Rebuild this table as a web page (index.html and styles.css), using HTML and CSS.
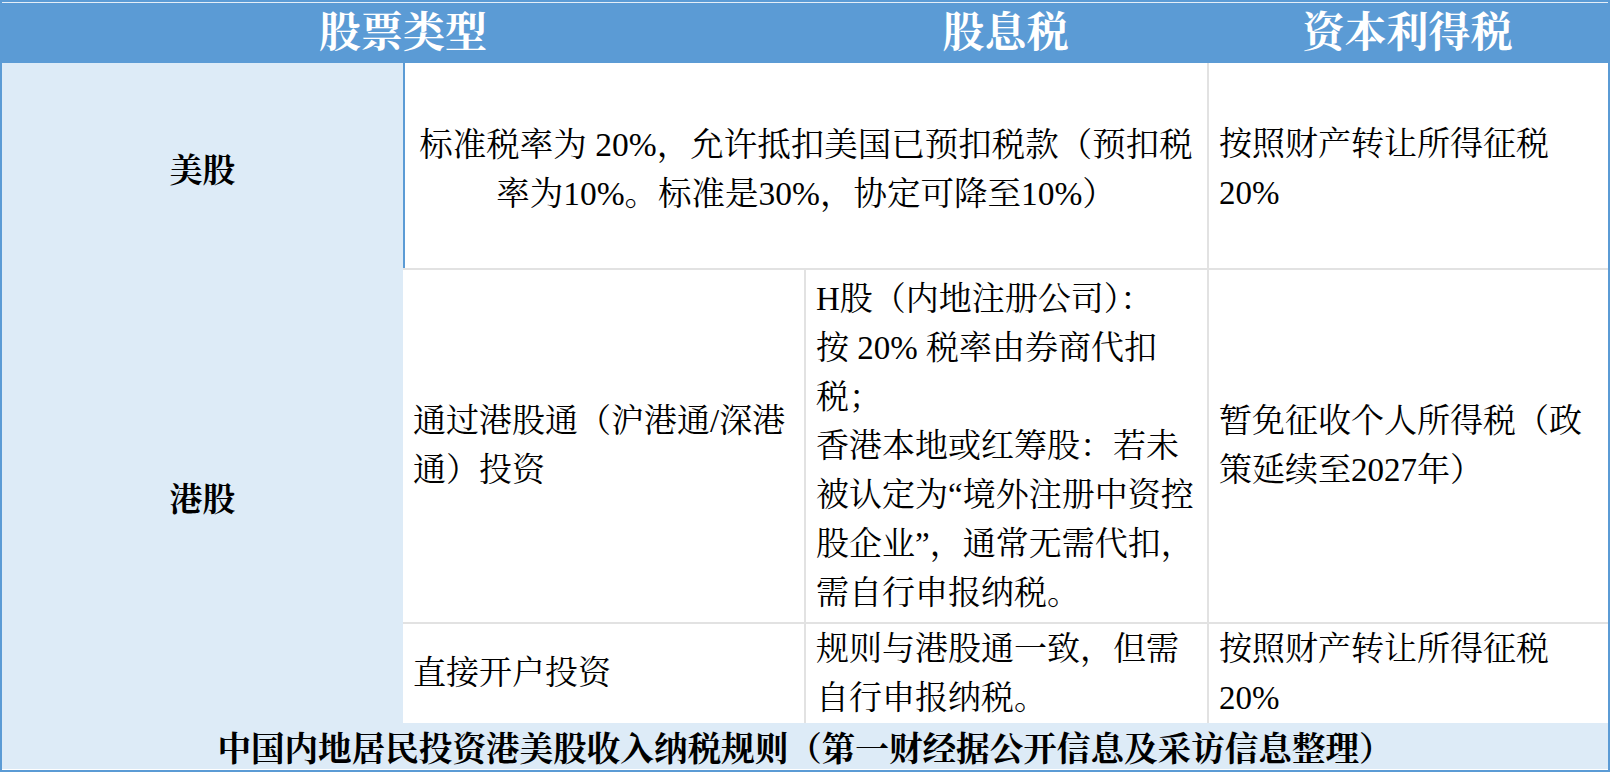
FILE: index.html
```html
<!DOCTYPE html>
<html lang="zh-CN">
<head>
<meta charset="utf-8">
<title>中国内地居民投资港美股收入纳税规则</title>
<link rel="stylesheet" href="styles.css">
</head>
<body>
<div class="sheet">
  <div class="head head-type">股票类型</div>
  <div class="head head-div">股息税</div>
  <div class="head head-cap">资本利得税</div>

  <div class="cell label label-us">美股</div>
  <div class="cell center us-div">标准税率为 20%，允许抵扣美国已预扣税款（预扣税<br>率为10%。标准是30%，协定可降至10%）</div>
  <div class="cell left sep-l us-cap">按照财产转让所得征税<br>20%</div>

  <div class="cell label label-hk">港股</div>
  <div class="cell left sep-t">通过港股通（沪港通/深港<br>通）投资</div>
  <div class="cell left sep-t sep-l">H股（内地注册公司）：<br>按 20% 税率由券商代扣<br>税；<br>香港本地或红筹股：若未<br>被认定为“境外注册中资控<br>股企业”，通常无需代扣，<br>需自行申报纳税。</div>
  <div class="cell left sep-t sep-l">暂免征收个人所得税（政<br>策延续至2027年）</div>

  <div class="cell left sep-t">直接开户投资</div>
  <div class="cell left sep-t sep-l">规则与港股通一致，但需<br>自行申报纳税。</div>
  <div class="cell left sep-t sep-l">按照财产转让所得征税<br>20%</div>

  <div class="foot">中国内地居民投资港美股收入纳税规则（第一财经据公开信息及采访信息整理）</div>
</div>
</body>
</html>
```

FILE: styles.css
```css
html, body {
  margin: 0;
  padding: 0;
  background: #ffffff;
}

.sheet {
  box-sizing: border-box;
  width: 1610px;
  height: 772px;
  border: 2px solid #5b9bd5;
  display: grid;
  grid-template-columns: 401px 401px 403px 401px;
  grid-template-rows: 61px 205px 354px 101px 46px;
  font-family: "Liberation Serif", "Noto Serif CJK SC", "Noto Sans CJK SC", serif;
  color: #000000;
  font-size: 33px;
  line-height: 49px;
}

.head {
  background: #5b9bd5;
  border-top: 1px solid #e4eef8;
  color: #ffffff;
  font-weight: bold;
  font-size: 42px;
  line-height: 58px;
  display: flex;
  align-items: center;
  justify-content: center;
  white-space: nowrap;
}

.head-type {
  grid-column: 1 / 3;
}

.cell {
  box-sizing: border-box;
  display: flex;
  align-items: center;
  white-space: nowrap;
  background: #ffffff;
}

.label {
  background: #ddebf7;
  font-weight: bold;
  justify-content: center;
}

.label-us {
  padding-top: 12px;
}

.label-hk {
  grid-row: 3 / 5;
  padding-top: 10px;
}

.center {
  justify-content: center;
  text-align: center;
}

.left {
  justify-content: flex-start;
  text-align: left;
  padding-left: 10px;
}

.us-div {
  grid-column: 2 / 4;
  border-left: 2px solid #5b9bd5;
  padding-top: 6px;
  font-size: 33.5px;
}

.us-cap {
  padding-top: 6px;
}

.sep-t {
  border-top: 2px solid #e2e2e2;
}

.sep-l {
  border-left: 2px solid #e2e2e2;
}

.foot {
  grid-column: 1 / 5;
  background: #ddebf7;
  font-weight: bold;
  font-size: 33.6px;
  display: flex;
  align-items: center;
  justify-content: center;
  white-space: nowrap;
  line-height: 44px;
  padding-top: 8px;
}
```
